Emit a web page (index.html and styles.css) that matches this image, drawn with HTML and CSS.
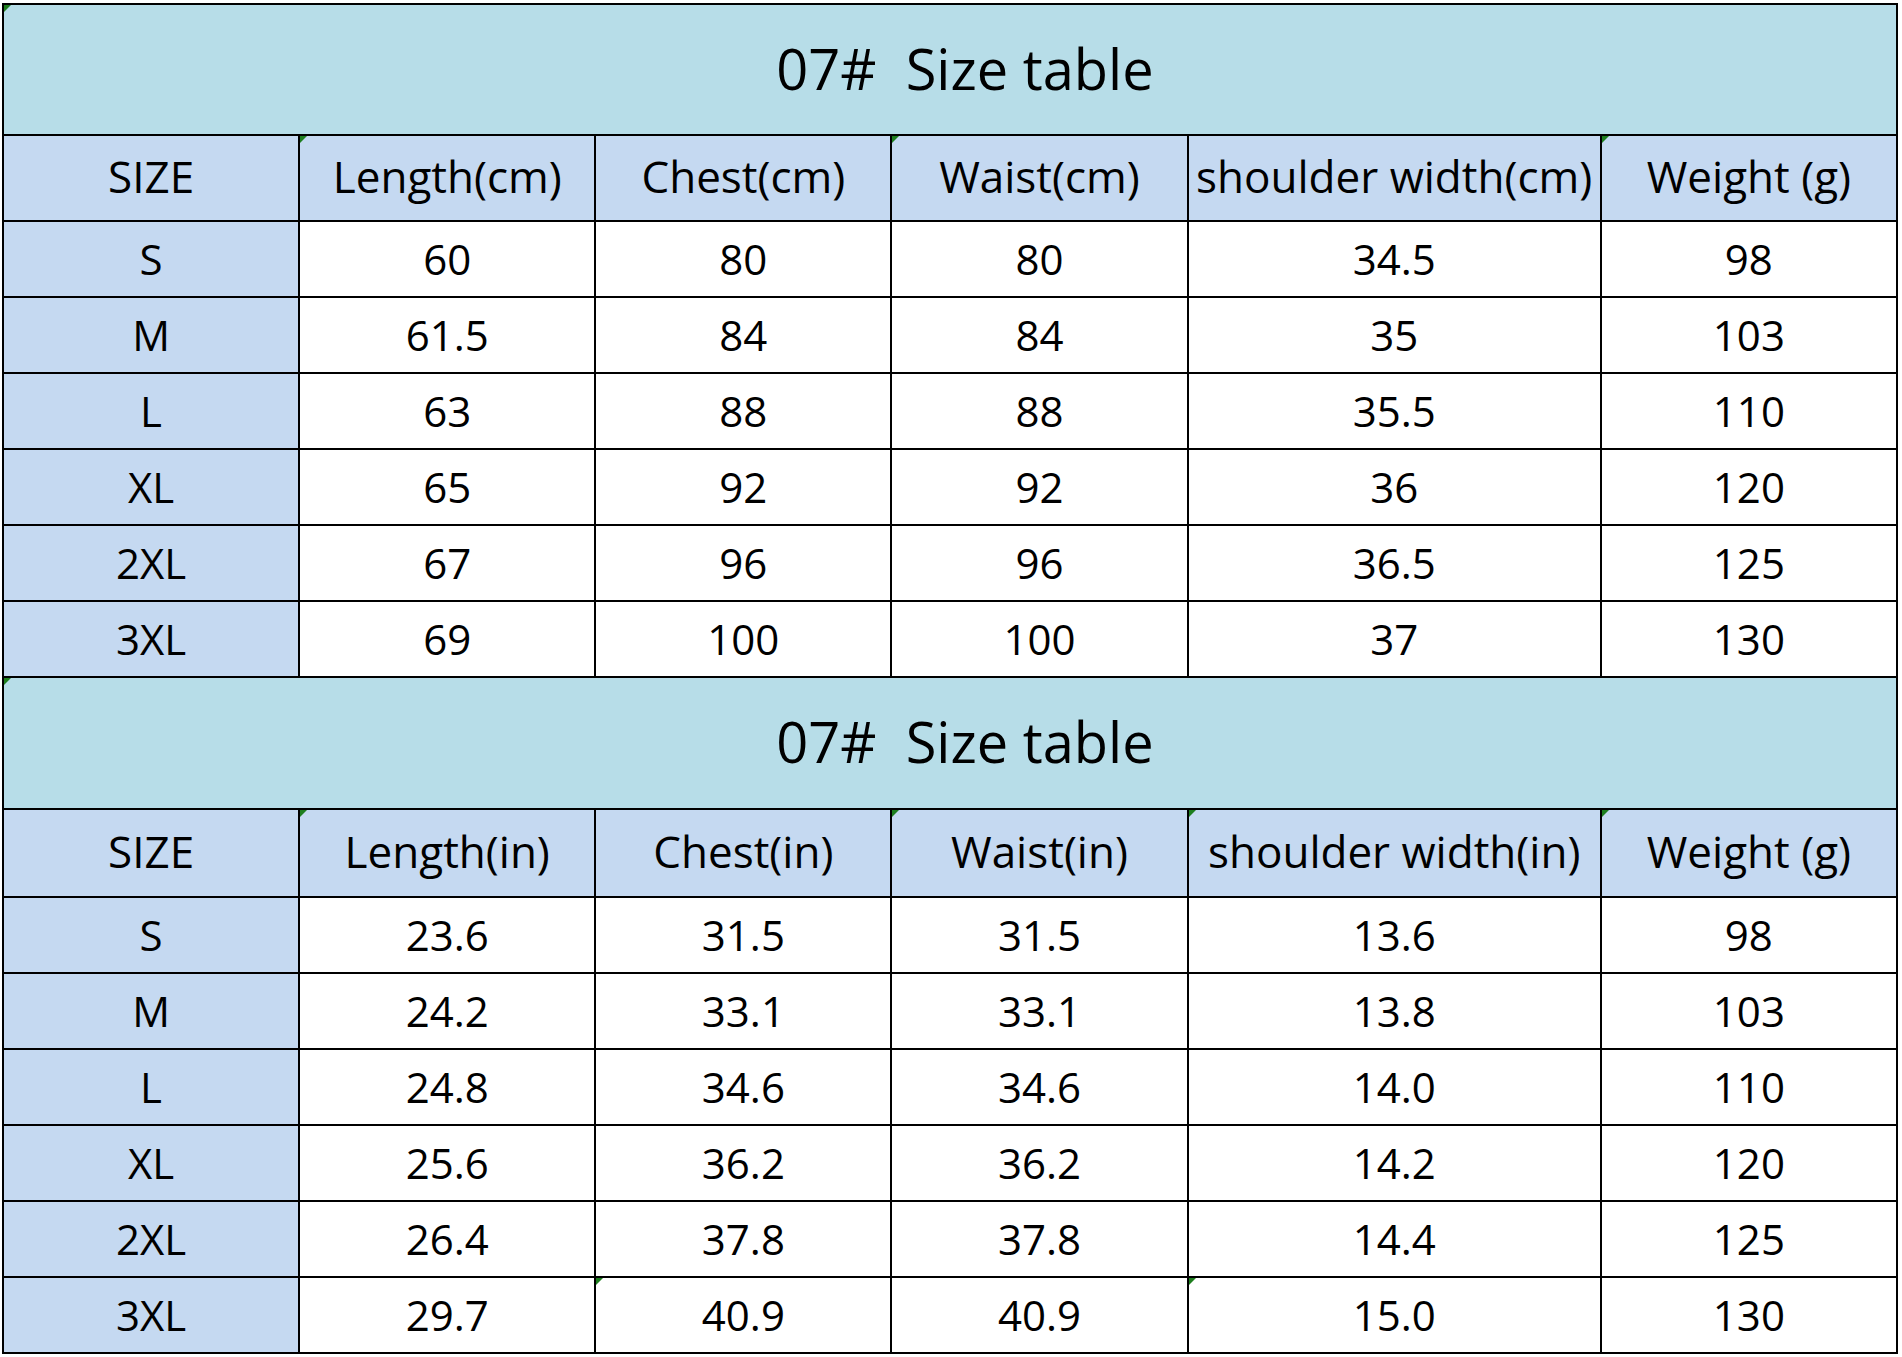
FILE: index.html
```html
<!DOCTYPE html>
<html>
<head>
<meta charset="utf-8">
<link rel="stylesheet" href="styles.css">
</head>
<body>
<div class="sheet">
  <table class="size-table">
    <colgroup>
      <col class="c-size"><col class="c-std"><col class="c-std"><col class="c-std"><col class="c-wide"><col class="c-std">
    </colgroup>
    <tr class="title-row"><td colspan="6" class="title mark">07#&nbsp;&nbsp;Size table</td></tr>
    <tr class="head-row">
      <td class="head">SIZE</td>
      <td class="head mark">Length(cm)</td>
      <td class="head">Chest(cm)</td>
      <td class="head mark">Waist(cm)</td>
      <td class="head">shoulder width(cm)</td>
      <td class="head mark">Weight (g)</td>
    </tr>
    <tr class="data-row"><td class="size">S</td><td>60</td><td>80</td><td>80</td><td>34.5</td><td>98</td></tr>
    <tr class="data-row"><td class="size">M</td><td>61.5</td><td>84</td><td>84</td><td>35</td><td>103</td></tr>
    <tr class="data-row"><td class="size">L</td><td>63</td><td>88</td><td>88</td><td>35.5</td><td>110</td></tr>
    <tr class="data-row"><td class="size">XL</td><td>65</td><td>92</td><td>92</td><td>36</td><td>120</td></tr>
    <tr class="data-row"><td class="size">2XL</td><td>67</td><td>96</td><td>96</td><td>36.5</td><td>125</td></tr>
    <tr class="data-row"><td class="size">3XL</td><td>69</td><td>100</td><td>100</td><td>37</td><td>130</td></tr>
  </table>
  <table class="size-table second">
    <colgroup>
      <col class="c-size"><col class="c-std"><col class="c-std"><col class="c-std"><col class="c-wide"><col class="c-std">
    </colgroup>
    <tr class="title-row"><td colspan="6" class="title mark">07#&nbsp;&nbsp;Size table</td></tr>
    <tr class="head-row">
      <td class="head">SIZE</td>
      <td class="head mark">Length(in)</td>
      <td class="head">Chest(in)</td>
      <td class="head mark">Waist(in)</td>
      <td class="head mark">shoulder width(in)</td>
      <td class="head mark">Weight (g)</td>
    </tr>
    <tr class="data-row"><td class="size">S</td><td>23.6</td><td>31.5</td><td>31.5</td><td>13.6</td><td>98</td></tr>
    <tr class="data-row"><td class="size">M</td><td>24.2</td><td>33.1</td><td>33.1</td><td>13.8</td><td>103</td></tr>
    <tr class="data-row"><td class="size">L</td><td>24.8</td><td>34.6</td><td>34.6</td><td>14.0</td><td>110</td></tr>
    <tr class="data-row"><td class="size">XL</td><td>25.6</td><td>36.2</td><td>36.2</td><td>14.2</td><td>120</td></tr>
    <tr class="data-row"><td class="size">2XL</td><td>26.4</td><td>37.8</td><td>37.8</td><td>14.4</td><td>125</td></tr>
    <tr class="data-row"><td class="size">3XL</td><td>29.7</td><td class="mark">40.9</td><td>40.9</td><td class="mark">15.0</td><td>130</td></tr>
  </table>
</div>
</body>
</html>
```
FILE: styles.css
```css
html, body {
  margin: 0;
  padding: 0;
  background: #ffffff;
}

.sheet {
  padding: 3px 0 0 2px;
}

.size-table {
  border-collapse: collapse;
  table-layout: fixed;
  width: 1896px;
  font-family: "Open Sans", "Noto Sans", sans-serif;
  color: #000000;
}

.size-table.second {
  margin-top: -2px;
}

.c-size { width: 296px; }
.c-std { width: 296px; }
.c-wide { width: 413px; }

.size-table td {
  border: 2px solid #000000;
  text-align: center;
  vertical-align: middle;
  padding: 0;
  position: relative;
  font-size: 42px;
  line-height: 1;
  white-space: nowrap;
  background: #ffffff;
}

.title-row { height: 131px; }
.head-row { height: 86px; }
.data-row { height: 76px; }

.second .title-row { height: 132px; }
.second .head-row { height: 88px; }

.size-table td.title {
  background: #b7dde8;
  font-size: 56px;
  padding-left: 30px;
  padding-bottom: 4px;
}

.size-table td.head {
  background: #c5d9f1;
  font-size: 44px;
  padding-bottom: 4px;
}

.size-table td.size {
  background: #c5d9f1;
}

.mark::before {
  content: "";
  position: absolute;
  left: 0;
  top: 0;
  width: 0;
  height: 0;
  border-top: 7px solid #1e7e1e;
  border-right: 7px solid transparent;
}
```
